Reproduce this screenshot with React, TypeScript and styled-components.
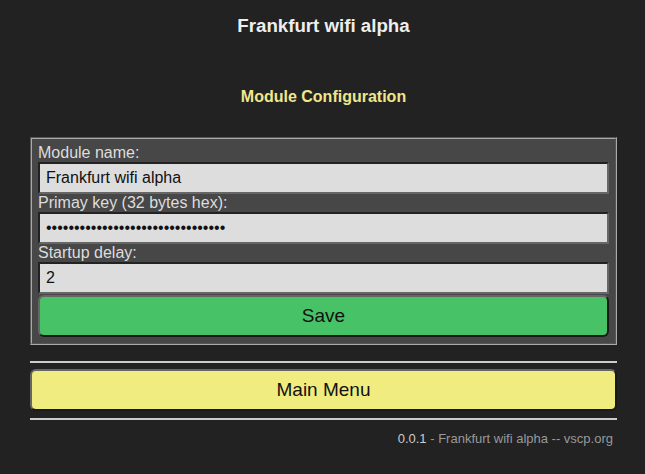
import React from "react";
import styled, { createGlobalStyle } from "styled-components";

const GlobalStyle = createGlobalStyle`
  html, body {
    margin: 0;
    padding: 0;
    background: #222;
  }
  body {
    font-family: "Liberation Sans", Arial, sans-serif;
    color: #ddd;
  }
`;

const Page = styled.div`
  width: 587px;
  margin: 0 auto;
  padding: 0 0 20px;
  box-sizing: border-box;
  transform: translateX(1px);
`;

const Title = styled.h1`
  margin: 0;
  padding-top: 15px;
  font-size: 18.7px;
  font-weight: bold;
  text-align: center;
  color: #eee;
  line-height: 22px;
`;

const SubTitle = styled.h2`
  margin: 50px 0 0;
  font-size: 16px;
  font-weight: bold;
  text-align: center;
  color: #f0e68c;
  line-height: 20px;
`;

const Form = styled.fieldset`
  margin: 30px 0 0;
  padding: 5px 6px 6px;
  border: 2px groove #aaa;
  background: #474747;
  display: flex;
  flex-direction: column;
  min-width: 0;
`;

const Label = styled.label`
  font-size: 16px;
  line-height: 18px;
  color: #ddd;
`;

const Input = styled.input`
  display: block;
  width: 100%;
  box-sizing: border-box;
  height: 32px;
  margin: 0;
  padding: 0 6px;
  font-family: "Liberation Sans", Arial, sans-serif;
  font-size: 16px;
  color: #111;
  background: #ddd;
  border: 2px solid;
  border-color: #222 #666 #666 #222;
  outline: none;
`;

const Button = styled.button<{ $bg: string }>`
  display: block;
  width: 100%;
  box-sizing: border-box;
  height: 42px;
  margin: 0;
  font-family: "Liberation Sans", Arial, sans-serif;
  font-size: 19px;
  color: #111;
  background: ${(p) => p.$bg};
  border: 2px solid;
  border-color: #666 #1a1a1a #1a1a1a #666;
  border-radius: 6px;
  cursor: pointer;
`;

const SaveButton = styled(Button)`
  margin-top: 1px;
`;

const Rule = styled.hr`
  margin: 16px 0 6px;
  border: 0;
  height: 2px;
  background: #ccc;
`;

const BottomRule = styled(Rule)`
  margin: 7px 0 0;
`;

const Footer = styled.div`
  margin-top: 11px;
  padding-right: 4px;
  text-align: right;
  font-size: 13px;
  color: #999;
`;

const Version = styled.span`
  color: #ccc;
`;

const fields = [
  { label: "Module name:", type: "text", value: "Frankfurt wifi alpha" },
  {
    label: "Primay key (32 bytes hex):",
    type: "password",
    value: "00112233445566778899aabbccddeeff",
  },
  { label: "Startup delay:", type: "text", value: "2" },
];

const App = () => {
  return (
    <>
      <GlobalStyle />
      <Page>
        <Title>Frankfurt wifi alpha</Title>
        <SubTitle>Module Configuration</SubTitle>
        <Form>
          {fields.map((f) => (
            <React.Fragment key={f.label}>
              <Label>{f.label}</Label>
              <Input type={f.type} defaultValue={f.value} />
            </React.Fragment>
          ))}
          <SaveButton $bg="#47c266">Save</SaveButton>
        </Form>
        <Rule />
        <Button $bg="#f0ec80">Main Menu</Button>
        <BottomRule />
        <Footer>
          <Version>0.0.1</Version> - Frankfurt wifi alpha -- vscp.org
        </Footer>
      </Page>
    </>
  );
};

export default App;
